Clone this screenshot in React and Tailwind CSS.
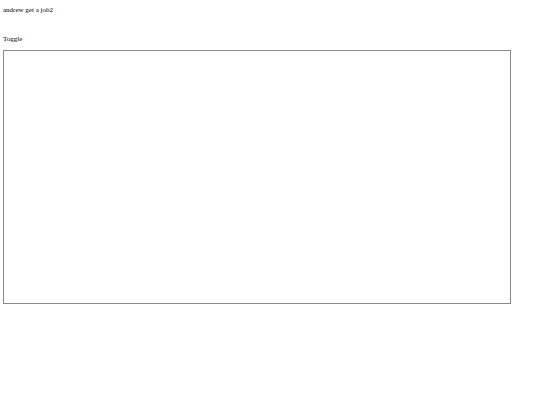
export default function App() {
  return (
    <div className="min-h-[405px] bg-white px-[3px] font-['Liberation_Serif',serif] text-[7px] leading-[8px] text-black">
      <p className="pt-[6px]">andrew get a job2</p>
      <div className="mt-[21px]">Toggle</div>
      <div className="mt-[7px] h-[254px] w-[508px] border border-[#8a8a8a]"></div>
    </div>
  );
}
